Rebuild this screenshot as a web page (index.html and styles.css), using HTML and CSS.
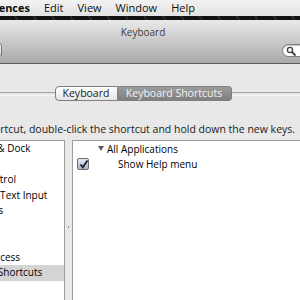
FILE: index.html
```html
<!DOCTYPE html>
<html lang="en">

<head>
    <meta charset="UTF-8">
    <meta name="viewport" content="width=device-width, initial-scale=1.0">
    <link rel="stylesheet" href="styles.css">
    <title>Keyboard</title>
</head>

<body>
    <div class="menubar">
        <span class="menuApp">System Preferences</span>
        <span>Edit</span>
        <span>View</span>
        <span>Window</span>
        <span>Help</span>
    </div>
    <div class="desktop"></div>
    <div class="window">
        <div class="titlebar">
            <div class="title">Keyboard</div>
            <div class="toolbar">
                <div class="showAll">Show All</div>
                <div class="search">
                    <svg width="12" height="12" viewBox="0 0 12 12">
                        <circle cx="5" cy="5" r="2.6" fill="none" stroke="#444" stroke-width="1.4"/>
                        <path d="M7 7 L10 10" stroke="#444" stroke-width="1.8" stroke-linecap="round"/>
                    </svg>
                </div>
            </div>
        </div>
        <div class="content">
            <div class="tabs">
                <span class="tab tabLeft">Keyboard</span>
                <span class="tab tabRight selected">Keyboard Shortcuts</span>
            </div>
            <p class="hint">To change a shortcut, double-click the shortcut and hold down the new keys.</p>
            <div class="panes">
                <ul class="categories">
                    <li>Launchpad &amp; Dock</li>
                    <li>Display</li>
                    <li>Mission Control</li>
                    <li>Keyboard &amp; Text Input</li>
                    <li>Screen Shots</li>
                    <li>Services</li>
                    <li>Spotlight</li>
                    <li>Universal Access</li>
                    <li class="active">Application Shortcuts</li>
                </ul>
                <div class="splitter"><span class="grip"></span></div>
                <div class="shortcuts">
                    <div class="row group"><span class="arrow"></span>All Applications</div>
                    <div class="row item">
                        <span class="check">
                            <svg width="11" height="11" viewBox="0 0 11 11">
                                <path d="M2.5 5.5 L4.8 8.3 L9.5 1.5" fill="none" stroke="#111a2c" stroke-width="1.7"/>
                            </svg>
                        </span>
                        <span class="label">Show Help menu</span>
                    </div>
                </div>
            </div>
        </div>
    </div>
</body>

</html>
```

FILE: styles.css
```css
* {
    padding: 0;
    margin: 0;
    list-style: none;
    box-sizing: border-box;
}

body {
    width: 300px;
    height: 300px;
    overflow: hidden;
    font-family: "Lucida Grande", "Open Sans", sans-serif;
    color: #111;
    background: #e8e8e8;
}

.menubar {
    display: flex;
    gap: 14px;
    height: 16px;
    line-height: 16px;
    font-size: 11px;
    white-space: nowrap;
    background: linear-gradient(#f2f2f2, #e2e2e2);
}

.menubar .menuApp {
    flex: none;
    width: 119px;
    margin-left: -89px;
    text-align: right;
    font-weight: bold;
}

.desktop {
    height: 4px;
    background: repeating-linear-gradient(60deg, #121212 0 14px, #2a2a2a 14px 16px);
}

.window {
    width: 526px;
    margin-left: -120px;
}

.titlebar {
    padding-top: 6px;
    background: linear-gradient(#e9e9e9, #a9a9a9);
    border-bottom: 1px solid #5a5a5a;
}

.titlebar .title {
    height: 13px;
    line-height: 13px;
    font-size: 10px;
    color: #3c3c3c;
    text-align: center;
}

.toolbar {
    display: flex;
    justify-content: space-between;
    align-items: center;
    height: 24px;
    padding: 4px 14px 6px 52px;
}

.toolbar .showAll {
    width: 70px;
    height: 14px;
    line-height: 13px;
    font-size: 9px;
    text-align: center;
    border: 1px solid #777;
    border-radius: 3px;
    background: linear-gradient(#fafafa, #d4d4d4);
}

.toolbar .search {
    width: 110px;
    height: 13px;
    padding: 0 0 0 2px;
    border: 1px solid #7d7d7d;
    border-radius: 7px;
    background: #fff;
    box-shadow: inset 0 1px 1px rgba(0, 0, 0, 0.25);
}

.toolbar .search svg {
    display: block;
}

.content {
    padding: 22px 0 0 39px;
}

.tabs {
    display: flex;
    align-items: center;
    margin-left: -39px;
}

.tabs::before,
.tabs::after {
    content: '';
    flex: 1;
    height: 2px;
    border-top: 1px solid #a2a2a2;
    border-bottom: 1px solid #f6f6f6;
}

.tabs .tab {
    height: 15px;
    line-height: 13px;
    font-size: 10.5px;
    text-align: center;
    border: 1px solid #7f7f7f;
}

.tabs .tabLeft {
    width: 63px;
    border-radius: 4px 0 0 4px;
    background: linear-gradient(#ffffff, #e6e6e6);
    color: #1a1a1a;
}

.tabs .tabRight {
    width: 114px;
    border-left: none;
    border-radius: 0 4px 4px 0;
}

.tabs .selected {
    background: linear-gradient(#9c9c9c, #7f7f7f);
    color: #f2f2f2;
}

.hint {
    margin: 22px 0 5px 2px;
    height: 12px;
    line-height: 12px;
    font-size: 10.5px;
    color: #1a1a1a;
    white-space: nowrap;
}

.panes {
    display: flex;
    height: 174px;
}

.categories {
    width: 146px;
    border: 1px solid #9d9d9d;
    background: #fff;
}

.categories li {
    height: 15.5px;
    line-height: 15.5px;
    padding-left: 23px;
    font-size: 10px;
    color: #000;
    white-space: nowrap;
}

.categories .active {
    background: #d4d4d4;
}

.splitter {
    display: flex;
    align-items: center;
    justify-content: center;
    width: 7px;
}

.splitter .grip {
    width: 1px;
    height: 2px;
    background: #8c8c8c;
}

.shortcuts {
    width: 308px;
    border: 1px solid #9d9d9d;
    background: #fff;
}

.shortcuts .row {
    display: flex;
    align-items: center;
    height: 15.5px;
    font-size: 10px;
    color: #000;
    white-space: nowrap;
}

.shortcuts .group {
    padding-left: 25px;
}

.shortcuts .arrow {
    width: 0;
    height: 0;
    margin-right: 3px;
    border-left: 3px solid transparent;
    border-right: 3px solid transparent;
    border-top: 5px solid #5b5b5b;
}

.shortcuts .item {
    padding-left: 4px;
}

.shortcuts .check {
    display: block;
    width: 12px;
    height: 12px;
    border: 1px solid #6c7078;
    border-radius: 2px;
    background: linear-gradient(#e3e8ef, #a6b3c5);
}

.shortcuts .check svg {
    display: block;
}

.shortcuts .label {
    margin-left: 29px;
}
```
